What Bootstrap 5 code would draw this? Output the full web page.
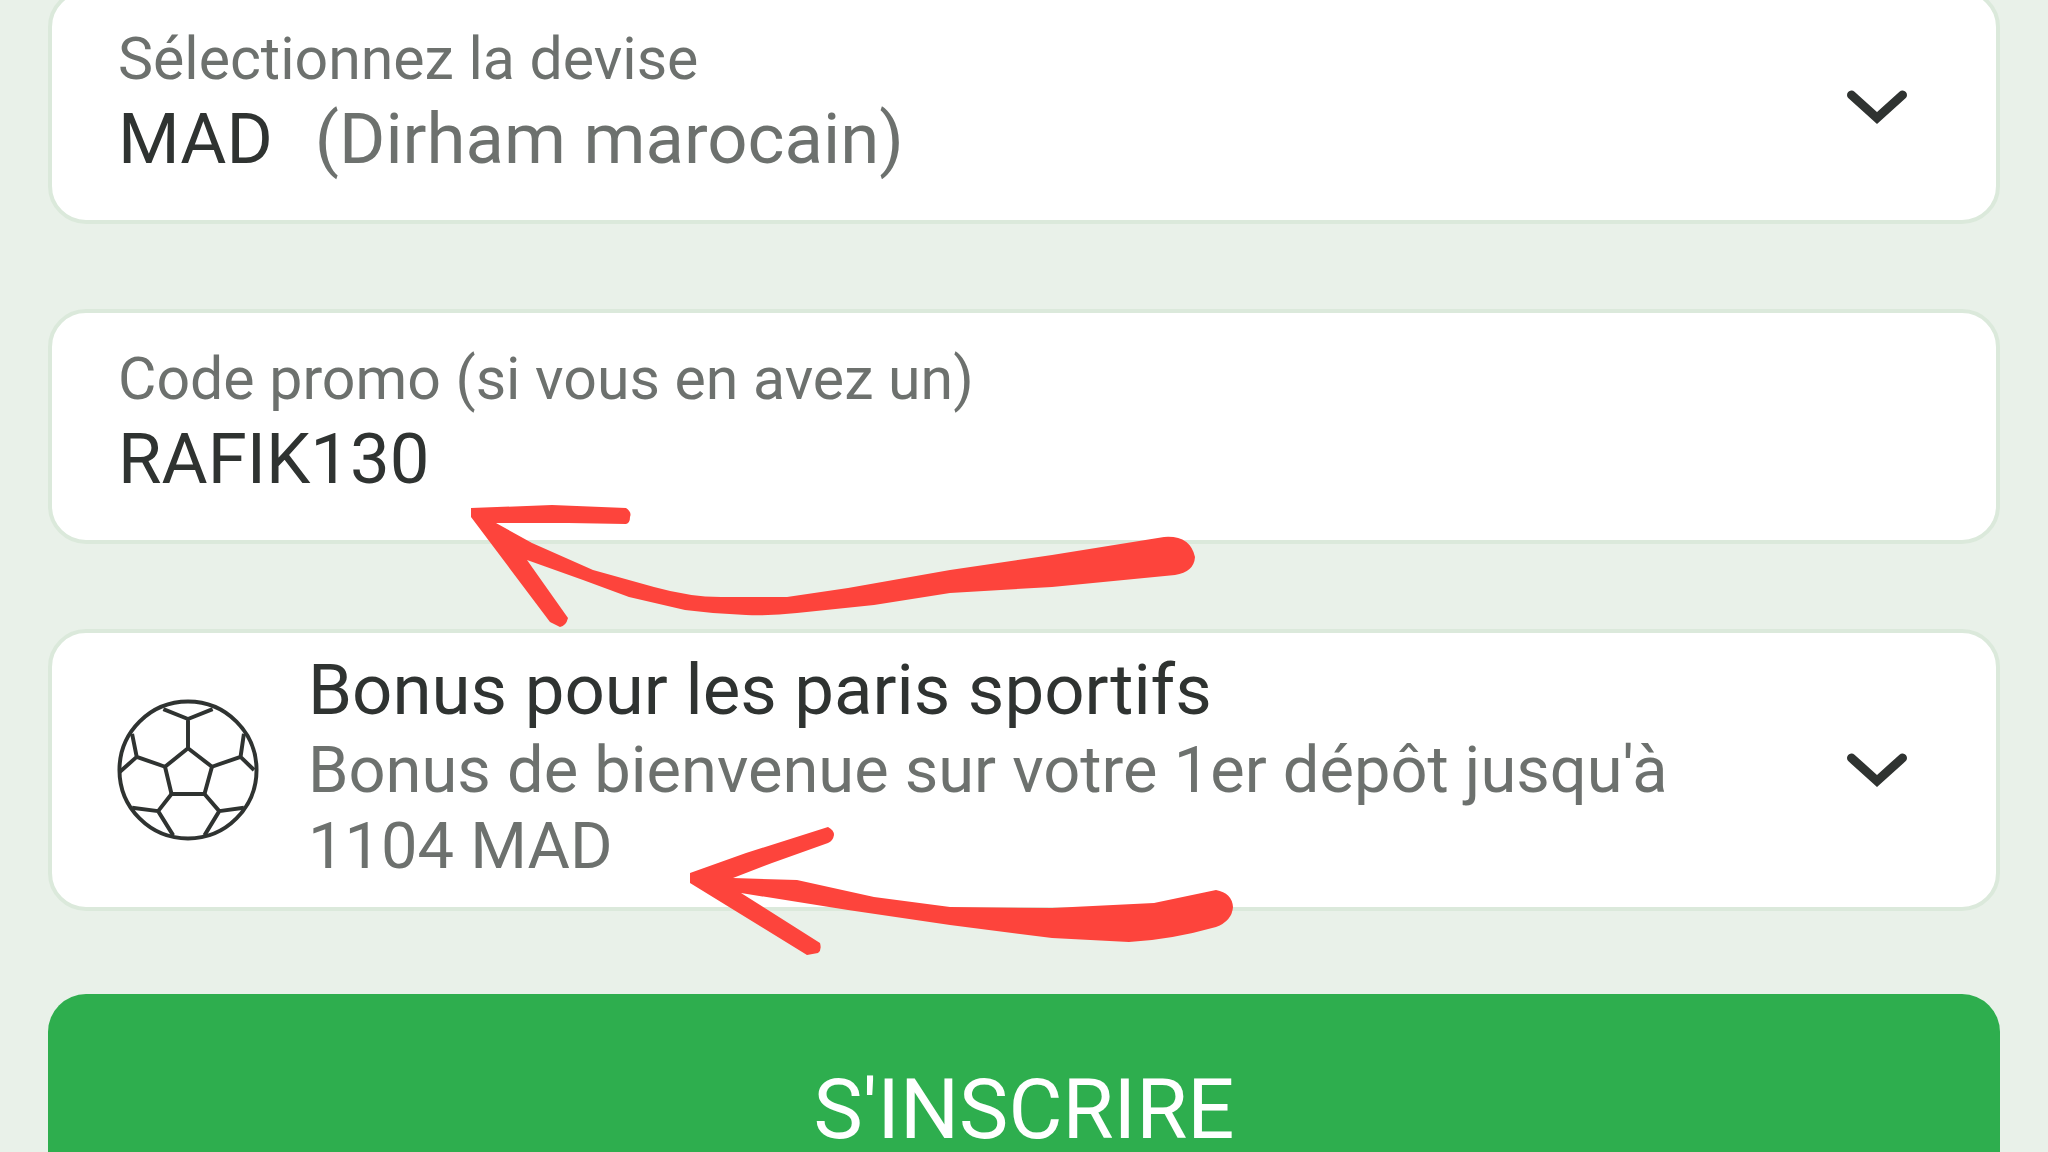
<!DOCTYPE html>
<html lang="fr">
<head>
  <meta charset="UTF-8" />
  <title>Inscription</title>
  <link href="https://cdn.jsdelivr.net/npm/bootstrap@5.3.3/dist/css/bootstrap.min.css" rel="stylesheet">
  <style>
    html, body { height: 100%; }
    body {
      background: #e9f1e9;
      font-family: Roboto, "Liberation Sans", sans-serif;
      overflow: hidden;
      position: relative;
    }
    .signup-wrap {
      width: 2048px;
      height: 1152px;
      overflow: hidden;
      padding: 0 48px;
      display: flex;
      flex-direction: column;
    }
    .field-box {
      flex: none;
      background: #fff;
      border: 4px solid #dbe9db;
      border-radius: 38px;
      height: 235px;
      padding: 0 66px;
    }
    .field-first { margin-top: -11px; }
    .field-gap { margin-top: 85px; }
    .field-bonus { height: 282px; }
    .field-copy { padding-bottom: 13px; }
    .field-label { font-size: 59px; line-height: 78px; color: #6d716e; }
    .field-value { font-size: 70.7px; line-height: 82px; color: #2f3331; }
    .field-note { color: #6d716e; margin-left: 42px; }
    .bonus-ball { width: 142px; height: 142px; flex: none; margin-right: 49px; margin-left: -1px; }
    .bonus-copy { padding-bottom: 4px; }
    .bonus-title { font-size: 70.8px; line-height: 76px; color: #2f3331; margin-bottom: 4px; }
    .bonus-text { font-size: 65px; line-height: 76px; color: #6d716e; width: 1400px; }
    .field-chev { width: 64px; height: 40px; flex: none; margin-right: 21px; }
    .signup-btn {
      flex: none;
      margin-top: 83px;
      height: 158px;
      width: 100%;
      background: #2eae4e;
      border: 0;
      border-radius: 38px 38px 0 0;
      color: #fff;
      font-size: 83px;
      line-height: 1;
      padding: 72px 0 0;
    }
    .signup-btn:hover { background: #2eae4e; color: #fff; }
    .scribble { position: absolute; left: 0; top: 0; width: 2048px; height: 1152px; pointer-events: none; }
  </style>
</head>
<body>

  <div class="signup-wrap">
    <div class="field-box field-first d-flex align-items-center justify-content-between">
      <div class="field-copy">
        <div class="field-label">Sélectionnez la devise</div>
        <div class="field-value">MAD<span class="field-note">(Dirham marocain)</span></div>
      </div>
      <svg class="field-chev" viewBox="0 0 64 40"><path d="M6.5 8 L32 31 L57.5 8" fill="none" stroke="#2f3331" stroke-width="9" stroke-linecap="round" stroke-linejoin="miter"/></svg>
    </div>

    <div class="field-box field-gap d-flex align-items-center">
      <div class="field-copy">
        <div class="field-label">Code promo (si vous en avez un)</div>
        <div class="field-value">RAFIK130</div>
      </div>
    </div>

    <div class="field-box field-bonus field-gap d-flex align-items-center">
      <svg class="bonus-ball" viewBox="0 0 144 144" fill="none" stroke="#2f3331" stroke-width="4" stroke-linejoin="round">
        <circle cx="72" cy="72" r="69.5"/>
        <path d="M72 50 L96.3 68.7 L88.7 96.3 L55.3 96.3 L48.7 68.7 Z"/>
        <path d="M72 50 V20.3 M47 10.3 L72 20.3 L97 10.3"/>
        <path d="M96.3 68.7 L125.3 58.7 L128.7 35.3 M125.3 58.7 L139 72"/>
        <path d="M48.7 68.7 L20 58.7 L15.3 35.3 M20 58.7 L3 73.7"/>
        <path d="M88.7 96.3 L103.7 113.7 L128.7 110.3 M103.7 113.7 L88.7 138.3"/>
        <path d="M55.3 96.3 L41.7 113.7 L15.3 110.3 M41.7 113.7 L57 138.3"/>
      </svg>
      <div class="bonus-copy flex-grow-1">
        <div class="bonus-title">Bonus pour les paris sportifs</div>
        <div class="bonus-text">Bonus de bienvenue sur votre 1er dépôt jusqu'à 1104 MAD</div>
      </div>
      <svg class="field-chev" viewBox="0 0 64 40"><path d="M6.5 8 L32 31 L57.5 8" fill="none" stroke="#2f3331" stroke-width="9" stroke-linecap="round" stroke-linejoin="miter"/></svg>
    </div>

    <button type="button" class="btn signup-btn">S'INSCRIRE</button>
  </div>

  <!-- hand drawn arrows over the form -->
  <svg class="scribble" viewBox="0 0 2048 1152">
    <g fill="#fd443c">
      <path d="M471 508 L552 505 L626 508 Q632 512 630 517 Q630 523 626 524 L568 523 L496 523 L532 543 L593 570 L654 587 Q690 597 721 597 L787 597 L848 588 L950 570 L1052 555 L1164 537 Q1190 535 1195 557 Q1194 572 1175 575 L1052 587 L950 593 L874 605 L797 613 Q770 616 746 615 Q715 614 685 610 L629 597 L583 580 L527 560 L568 618 Q566 626 560 627 L550 622 L471 517 Z"/>
      <path d="M690 873 L746 853 L828 827 Q834 830 834 835 Q833 841 828 843 L772 863 L733 878 L797 880 L874 897 L950 907 L1052 908 L1154 903 L1216 890 Q1232 893 1233 907 Q1232 921 1216 927 Q1170 940 1129 942 L1052 938 L950 925 L848 910 L741 893 L820 943 Q822 950 818 953 L807 955 L690 883 Z"/>
    </g>
  </svg>

  <script src="https://cdn.jsdelivr.net/npm/bootstrap@5.3.3/dist/js/bootstrap.bundle.min.js"></script>
</body>
</html>
